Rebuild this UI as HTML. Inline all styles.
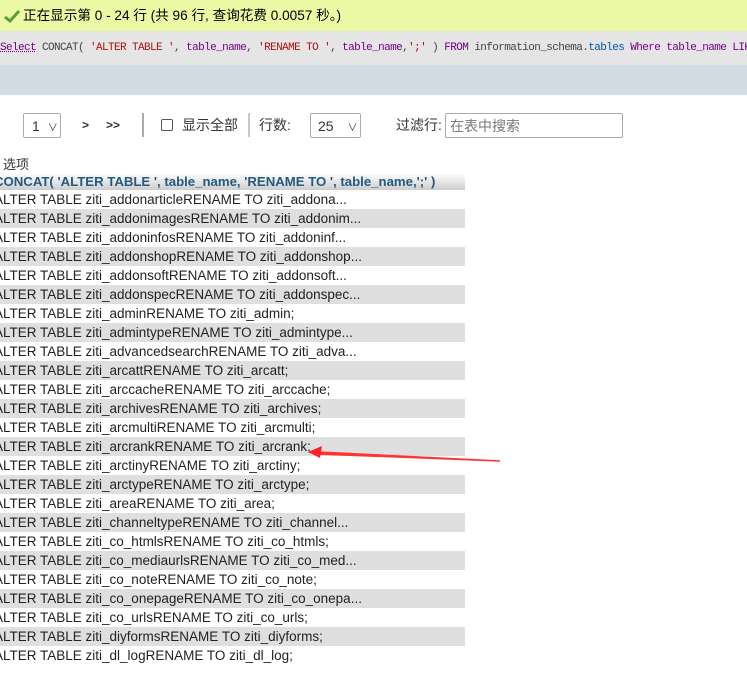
<!DOCTYPE html>
<html><head><meta charset="utf-8"><style>
body{margin:0;width:747px;height:678px;overflow:hidden;background:#fff;font-family:"Liberation Sans","Noto Sans CJK SC",sans-serif;font-size:13px;color:#333;position:relative}
.msg{position:absolute;left:0;top:0;width:747px;height:31px;background:#ebf8a4;color:#000;font-size:13.6px;line-height:32px}
.sql{position:absolute;left:0;top:31px;width:747px;height:34px;background:#e5e5e5;font-family:"Liberation Mono","Noto Sans CJK SC",monospace;font-size:11px;line-height:34px;white-space:nowrap;color:#444;letter-spacing:-0.6px}
.band{position:absolute;left:0;top:65px;width:747px;height:30px;background:#d3dce3}
.k{color:#708}.s{color:#a11}.b{color:#05a}
.ctl{position:absolute;top:113px;height:25px;line-height:25px;font-size:14px;color:#333}
.sel{border:1px solid #aaa;border-radius:2px;background:#fff;box-sizing:border-box}
.sep{position:absolute;top:113px;width:2px;height:24px;background:#aaa}
table{position:absolute;left:-6px;top:173px;border-collapse:collapse;width:471px}
td{height:19px;padding:0;white-space:nowrap;font-size:13.5px;line-height:19px;color:#222}
th{height:17px;padding:0;text-align:left;font-size:13.2px;color:#235a81;background:linear-gradient(#fff,#ccc);line-height:17px;white-space:nowrap}
tr.g td{background:#dfdfdf}
</style></head><body>
<div class="msg"><svg style="position:absolute;left:4px;top:9px" width="16" height="14" viewBox="0 0 16 14"><path d="M1 8 L6 12 L15 2" stroke="#5a9e3a" stroke-width="3" fill="none"/></svg><span style="position:absolute;left:23px">正在显示第 0 - 24 行 (共 96 行, 查询花费 0.0057 秒。)</span></div>
<div class="sql"><span class="k" style="text-decoration:underline dotted">Select</span> CONCAT( <span class="s">'ALTER TABLE '</span>, <span class="k">table_name</span>, <span class="s">'RENAME TO '</span>, <span class="k">table_name</span>,<span class="s">';'</span> ) <span class="k">FROM</span> information_schema.<span class="b">tables</span> <span class="k">Where</span> <span class="k">table_name</span> <span class="k">LIKE</span></div>
<div class="band"></div>
<div class="ctl sel" style="left:23px;width:38px;padding-left:8px">1 <span style="font-size:10px;margin-left:4px">&#8744;</span></div>
<div class="ctl" style="left:82px;font-weight:bold;font-size:12px">&gt;</div>
<div class="ctl" style="left:106px;font-weight:bold;font-size:12px">&gt;&gt;</div>
<div class="sep" style="left:142px"></div>
<div class="ctl" style="left:161px;top:119px;width:12px;height:12px;border:1px solid #555;border-radius:2px;box-sizing:border-box"></div>
<div class="ctl" style="left:182px">显示全部</div>
<div class="sep" style="left:248px;background:#c0c8d0"></div>
<div class="ctl" style="left:259px">行数:</div>
<div class="ctl sel" style="left:310px;width:51px;padding-left:7px">25 <span style="font-size:10px;margin-left:10px">&#8744;</span></div>
<div class="ctl" style="left:396px">过滤行:</div>
<div class="ctl sel" style="left:445px;width:178px;padding-left:4px;color:#777">在表中搜索</div>
<div style="position:absolute;left:3px;top:154px;font-size:13px">选项</div>
<table>
<tr><th>CONCAT( 'ALTER TABLE ', table_name, 'RENAME TO ', table_name,';' )</th></tr>
<tr><td>ALTER TABLE ziti_addonarticleRENAME TO ziti_addona...</td></tr>
<tr class="g"><td>ALTER TABLE ziti_addonimagesRENAME TO ziti_addonim...</td></tr>
<tr><td>ALTER TABLE ziti_addoninfosRENAME TO ziti_addoninf...</td></tr>
<tr class="g"><td>ALTER TABLE ziti_addonshopRENAME TO ziti_addonshop...</td></tr>
<tr><td>ALTER TABLE ziti_addonsoftRENAME TO ziti_addonsoft...</td></tr>
<tr class="g"><td>ALTER TABLE ziti_addonspecRENAME TO ziti_addonspec...</td></tr>
<tr><td>ALTER TABLE ziti_adminRENAME TO ziti_admin;</td></tr>
<tr class="g"><td>ALTER TABLE ziti_admintypeRENAME TO ziti_admintype...</td></tr>
<tr><td>ALTER TABLE ziti_advancedsearchRENAME TO ziti_adva...</td></tr>
<tr class="g"><td>ALTER TABLE ziti_arcattRENAME TO ziti_arcatt;</td></tr>
<tr><td>ALTER TABLE ziti_arccacheRENAME TO ziti_arccache;</td></tr>
<tr class="g"><td>ALTER TABLE ziti_archivesRENAME TO ziti_archives;</td></tr>
<tr><td>ALTER TABLE ziti_arcmultiRENAME TO ziti_arcmulti;</td></tr>
<tr class="g"><td>ALTER TABLE ziti_arcrankRENAME TO ziti_arcrank;</td></tr>
<tr><td>ALTER TABLE ziti_arctinyRENAME TO ziti_arctiny;</td></tr>
<tr class="g"><td>ALTER TABLE ziti_arctypeRENAME TO ziti_arctype;</td></tr>
<tr><td>ALTER TABLE ziti_areaRENAME TO ziti_area;</td></tr>
<tr class="g"><td>ALTER TABLE ziti_channeltypeRENAME TO ziti_channel...</td></tr>
<tr><td>ALTER TABLE ziti_co_htmlsRENAME TO ziti_co_htmls;</td></tr>
<tr class="g"><td>ALTER TABLE ziti_co_mediaurlsRENAME TO ziti_co_med...</td></tr>
<tr><td>ALTER TABLE ziti_co_noteRENAME TO ziti_co_note;</td></tr>
<tr class="g"><td>ALTER TABLE ziti_co_onepageRENAME TO ziti_co_onepa...</td></tr>
<tr><td>ALTER TABLE ziti_co_urlsRENAME TO ziti_co_urls;</td></tr>
<tr class="g"><td>ALTER TABLE ziti_diyformsRENAME TO ziti_diyforms;</td></tr>
<tr><td>ALTER TABLE ziti_dl_logRENAME TO ziti_dl_log;</td></tr>
</table>
<svg style="position:absolute;left:0;top:0" width="747" height="678"><path d="M318 452 L500 461 L318 454Z" fill="#f33" stroke="#f33" stroke-width="1.5"/><path d="M308 452 L322 446 L320 458Z" fill="#f22"/></svg>
</body></html>
